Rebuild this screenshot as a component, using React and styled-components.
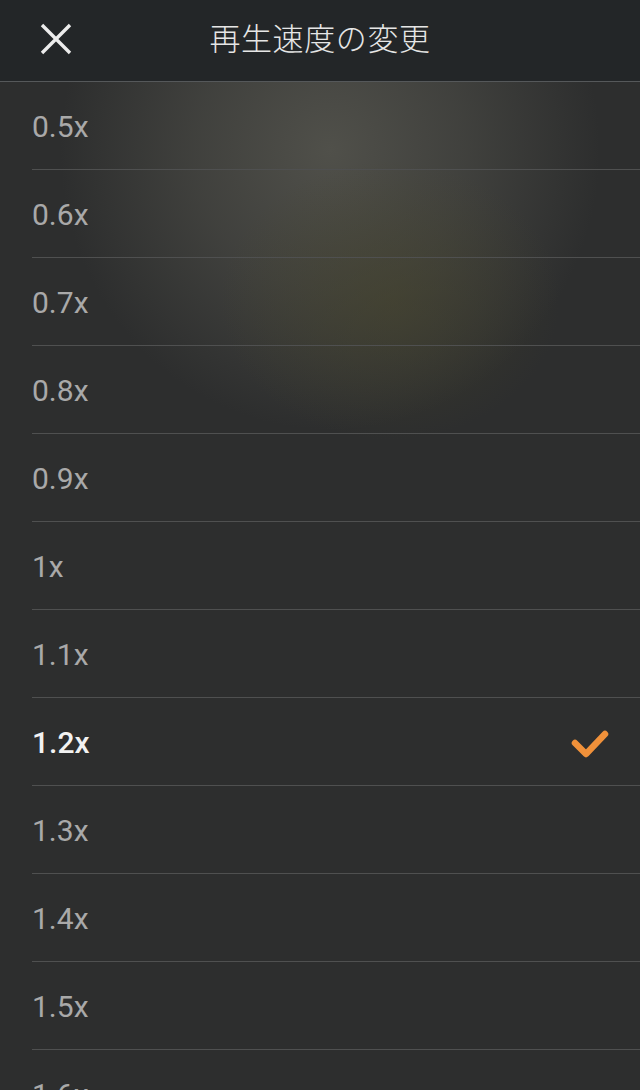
import React from "react";
import styled, { createGlobalStyle } from "styled-components";

const Global = createGlobalStyle`
  html, body { margin: 0; padding: 0; background: #2d2e2e; }
  body { font-family: Roboto, "Noto Sans", "Noto Sans CJK JP", sans-serif; overflow: hidden; }
  * { box-sizing: border-box; }
`;

const Screen = styled.div`
  width: 640px;
  height: 1090px;
  overflow: hidden;
  display: flex;
  flex-direction: column;
  background:
    radial-gradient(ellipse 170px 140px at 390px 300px, rgba(72, 70, 42, 0.5), rgba(72, 70, 42, 0) 100%),
    radial-gradient(ellipse 270px 280px at 330px 150px, rgba(80, 80, 74, 1), rgba(80, 80, 74, 0.55) 50%, rgba(80, 80, 74, 0) 100%),
    #2d2e2e;
`;

const Header = styled.header`
  height: 82px;
  flex: none;
  display: grid;
  grid-template-columns: 112px 1fr 112px;
  align-items: center;
  background: #232628;
  border-bottom: 1px solid #55585a;
`;

const CloseButton = styled.button`
  background: none;
  border: 0;
  padding: 0;
  margin-left: 38px;
  margin-bottom: 4px;
  width: 36px;
  height: 36px;
  display: flex;
  align-items: center;
  justify-content: center;
  color: #ececec;
  cursor: pointer;
`;

const Title = styled.h1`
  margin: 0;
  text-align: center;
  font-family: "Noto Sans CJK JP", sans-serif;
  font-weight: 300;
  font-size: 31px;
  letter-spacing: 0.6px;
  color: #e6e6e6;
  padding-bottom: 8px;
`;

const List = styled.ul`
  list-style: none;
  margin: 0;
  padding: 0 0 0 32px;
  display: flex;
  flex-direction: column;
`;

const Row = styled.li`
  height: 88px;
  flex: none;
  display: flex;
  align-items: center;
  justify-content: space-between;
  padding-right: 30px;
  border-bottom: 1px solid #4f5050;
`;

const Label = styled.span`
  font-family: Roboto, "Liberation Sans", sans-serif;
  font-size: 30px;
  font-weight: ${(p) => (p.$selected ? 500 : 400)};
  color: ${(p) => (p.$selected ? "#f2f2f2" : "#a9a9a9")};
  margin-top: 2px;
`;

const speeds = ["0.5x", "0.6x", "0.7x", "0.8x", "0.9x", "1x", "1.1x", "1.2x", "1.3x", "1.4x", "1.5x", "1.6x"];

const CheckIcon = () => (
  <svg width="40" height="34" viewBox="0 0 40 34">
    <path d="M5 18 L16 29 L35 9" fill="none" stroke="#f0913a" strokeWidth="6.5" strokeLinecap="round" strokeLinejoin="round" />
  </svg>
);

const CloseIcon = () => (
  <svg width="34" height="34" viewBox="0 0 34 34">
    <path d="M3 3 L31 31 M31 3 L3 31" stroke="currentColor" strokeWidth="3.4" strokeLinecap="butt" />
  </svg>
);

export default function App() {
  const selected = "1.2x";
  return (
    <Screen>
      <Global />
      <Header>
        <CloseButton aria-label="閉じる">
          <CloseIcon />
        </CloseButton>
        <Title>再生速度の変更</Title>
        <div />
      </Header>
      <List>
        {speeds.map((s) => (
          <Row key={s}>
            <Label $selected={s === selected}>{s}</Label>
            {s === selected && <CheckIcon />}
          </Row>
        ))}
      </List>
    </Screen>
  );
}
